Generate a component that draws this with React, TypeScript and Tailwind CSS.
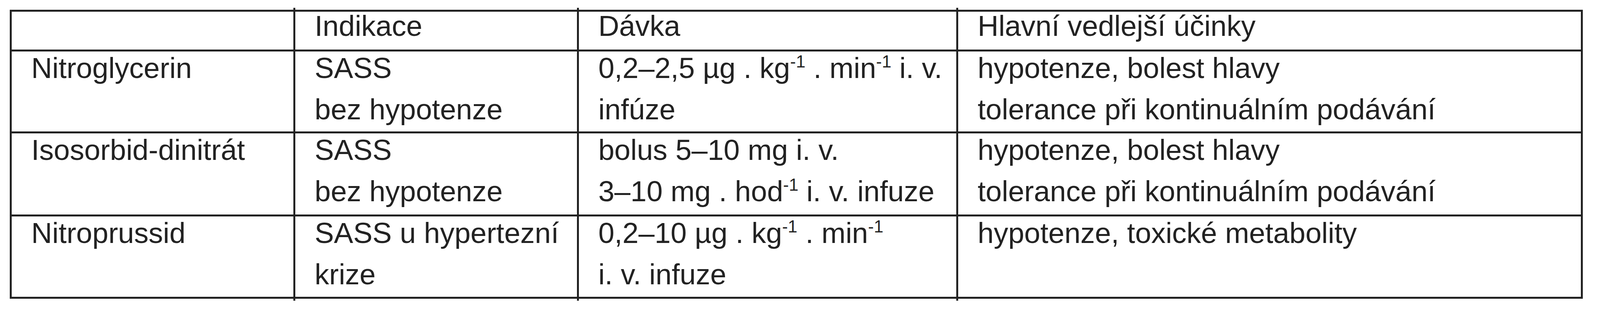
type Line = React.ReactNode;

const grid = "grid grid-cols-[minmax(0,765fr)_minmax(0,771fr)_minmax(0,1031fr)_minmax(0,1698fr)]";

function Sup() {
  return <sup className="text-[44px] -top-[27px]">-1</sup>;
}

const header = ["", "Indikace", "Dávka", "Hlavní vedlejší účinky"];

const rows: { h: string; cells: Line[][] }[] = [
  {
    h: "h-[210px]",
    cells: [
      ["Nitroglycerin"],
      ["SASS", "bez hypotenze"],
      [<>0,2–2,5 µg . kg<Sup /> . min<Sup /> i. v.</>, "infúze"],
      ["hypotenze, bolest hlavy", "tolerance při kontinuálním podávání"],
    ],
  },
  {
    h: "h-[213px]",
    cells: [
      ["Isosorbid-dinitrát"],
      ["SASS", "bez hypotenze"],
      ["bolus 5–10 mg i. v.", <>3–10 mg . hod<Sup /> i. v. infuze</>],
      ["hypotenze, bolest hlavy", "tolerance při kontinuálním podávání"],
    ],
  },
  {
    h: "h-[206px]",
    cells: [
      ["Nitroprussid"],
      ["SASS u hypertezní", "krize"],
      [<>0,2–10 µg . kg<Sup /> . min<Sup /></>, "i. v. infuze"],
      ["hypotenze, toxické metabolity"],
    ],
  },
];

// the column rules poke a few px past the outer frame, top and bottom
function Tick({ bottom }: { bottom?: boolean }) {
  return (
    <div
      className={`absolute -left-[5px] w-[5px] h-[7px] bg-[#222] ${bottom ? "-bottom-[10px]" : "-top-[10px]"}`}
    />
  );
}

export default function App() {
  return (
    <div className="bg-white h-[800px] pt-[25px] pl-[25px] pr-[44px] font-['Liberation_Sans',Arial,sans-serif] text-[74px] text-[#222]">
      <div className="border-[5px] border-[#222]">
        <div className={`${grid} h-[102px] border-b-[5px] border-[#222]`}>
          {header.map((t, i) => (
            <div
              key={i}
              className={`relative pl-[50px] leading-[74px] whitespace-nowrap border-[#222] ${i > 0 ? "border-l-[5px]" : ""}`}
            >
              {i > 0 && <Tick />}
              {t}
            </div>
          ))}
        </div>
        {rows.map((r, ri) => {
          const last = ri === rows.length - 1;
          return (
            <div key={ri} className={`${grid} ${r.h} ${last ? "" : "border-b-[5px] border-[#222]"}`}>
              {r.cells.map((lines, ci) => (
                <div
                  key={ci}
                  className={`relative pl-[50px] flex flex-col gap-[20px] border-[#222] ${ci > 0 ? "border-l-[5px]" : ""}`}
                >
                  {last && ci > 0 && <Tick bottom />}
                  {lines.map((l, li) => (
                    <div key={li} className="leading-[86px] whitespace-nowrap">
                      {l}
                    </div>
                  ))}
                </div>
              ))}
            </div>
          );
        })}
      </div>
    </div>
  );
}
